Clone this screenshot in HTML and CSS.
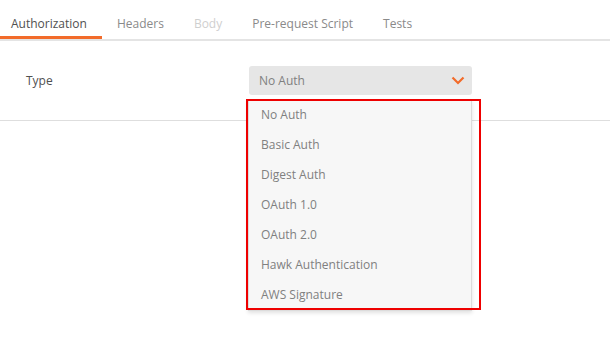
FILE: index.html
```html
<!DOCTYPE html>
<html>
<head>
<meta charset="utf-8">
<link rel="stylesheet" href="styles.css">
</head>
<body>
<div class="tabs">
  <div class="tab active">Authorization</div>
  <div class="tab">Headers</div>
  <div class="tab disabled">Body</div>
  <div class="tab">Pre-request Script</div>
  <div class="tab">Tests</div>
</div>
<div class="auth-row">
  <div class="label">Type</div>
  <div class="select-wrap">
    <div class="select">
      <span>No Auth</span>
      <svg class="chev" width="14" height="9" viewBox="0 0 14 9"><path d="M1.5 1.5 L7 7 L12.5 1.5" fill="none" stroke="#f26b2a" stroke-width="2.2"/></svg>
    </div>
    <div class="menu">
      <div class="item">No Auth</div>
      <div class="item">Basic Auth</div>
      <div class="item">Digest Auth</div>
      <div class="item">OAuth 1.0</div>
      <div class="item">OAuth 2.0</div>
      <div class="item">Hawk Authentication</div>
      <div class="item">AWS Signature</div>
    </div>
    <div class="highlight"></div>
  </div>
</div>
</body>
</html>
```
FILE: styles.css
```css
html, body {
  margin: 0;
  padding: 0;
  background: #ffffff;
  font-family: "Open Sans", "Noto Sans", sans-serif;
  font-size: 12px;
}
body { min-height: 356px; }
.tabs {
  display: flex;
  height: 39px;
  border-bottom: 2px solid #e4e4e4;
}
.tab {
  padding: 0 15px;
  height: 39px;
  box-sizing: border-box;
  color: #8a8a8a;
  line-height: 47px;
}
.tab.active {
  padding-left: 11px;
  padding-right: 15px;
  color: #505050;
  border-bottom: 3px solid #f26b2a;
}
.tab.disabled { color: #cfcfcf; }
.auth-row {
  display: flex;
  align-items: center;
  height: 80px;
  border-bottom: 1px solid #dedede;
  padding-left: 26px;
  box-sizing: border-box;
}
.label {
  width: 223px;
  color: #505050;
}
.select-wrap {
  position: relative;
}
.select {
  width: 223px;
  height: 29px;
  box-sizing: border-box;
  background: #e6e6e6;
  border-radius: 3px;
  display: flex;
  align-items: center;
  justify-content: space-between;
  padding: 0 7px 0 10px;
  color: #808080;
}
.chev { display: block; margin-top: -1px; }
.menu {
  position: absolute;
  top: 34px;
  left: -1px;
  width: 224px;
  background: #f7f7f7;
  border: 1px solid #dcdcdc;
  border-top: none;
  box-sizing: border-box;
  box-shadow: 0 2px 4px rgba(0,0,0,0.12);
  z-index: 2;
}
.item {
  height: 30px;
  line-height: 30px;
  padding-left: 12px;
  color: #808080;
}
.highlight {
  position: absolute;
  top: 33px;
  left: -3px;
  width: 235px;
  height: 211px;
  border: 2px solid #ee0000;
  box-sizing: border-box;
  z-index: 3;
}
```
